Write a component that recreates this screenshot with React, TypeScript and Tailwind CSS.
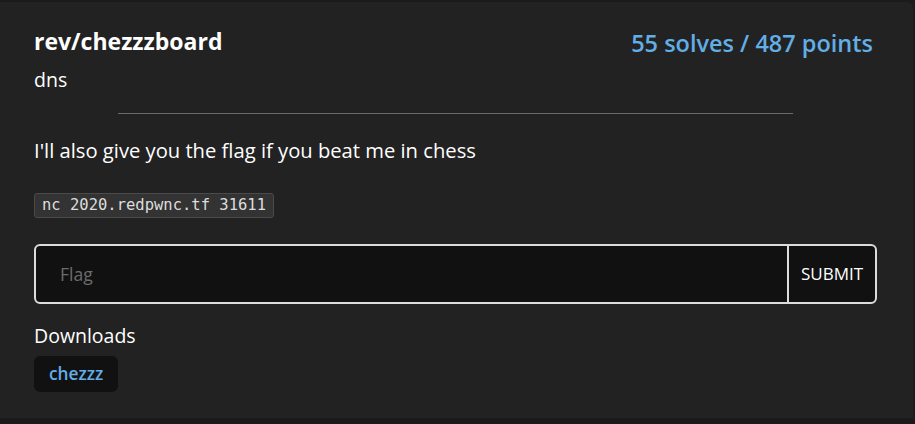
export default function App() {
  return (
    <div className="h-[424px] w-[915px] overflow-hidden bg-[#1b1b1b] font-['Open_Sans',sans-serif] text-white">
      <div className="mt-[2px] h-[416px] w-[913px] rounded-tr-[6px] bg-[#222222] pl-[34px] pr-[36px] pt-[24px]">
        <div className="flex items-start justify-between">
          <div>
            <h1 className="text-[23px] font-bold leading-[30px]">rev/chezzzboard</h1>
            <p className="mt-[11px] text-[19.5px] leading-[26px]">dns</p>
          </div>
          <div className="pr-[4px] pt-[2px] text-[23.5px] font-semibold leading-[30px] text-[#62aee6]">
            55 solves / 487 points
          </div>
        </div>
        <div className="mx-auto mt-[20px] h-px w-[675px] bg-[#6b6b6b]" />
        <p className="mt-[22px] text-[20.2px] leading-[28px]">
          I'll also give you the flag if you beat me in chess
        </p>
        <div className="mt-[29px] flex">
          <code className="block rounded-[3px] border border-[#4a4a4a] bg-[#333333] px-[7px] py-[2px] font-['DejaVu_Sans_Mono',monospace] text-[15.5px] leading-[19px] text-[#dddddd]">
            nc 2020.redpwnc.tf 31611
          </code>
        </div>
        <div className="mt-[26px] flex h-[60px] overflow-hidden rounded-[6px] border-2 border-[#dcdcdc] bg-[#111111]">
          <input
            placeholder="Flag"
            className="flex-1 bg-transparent px-[24px] text-[17.6px] text-white outline-none placeholder:text-[#6c6c6c]"
          />
          <button className="w-[88px] border-l-2 border-[#dcdcdc] text-[17px] text-white">
            SUBMIT
          </button>
        </div>
        <p className="mt-[19px] text-[19.5px] leading-[26px]">Downloads</p>
        <div className="mt-[7px] flex">
          <span className="block rounded-[6px] bg-[#111111] px-[15px] py-[6px] text-[17.3px] font-semibold leading-[24px] text-[#62aee6]">
            chezzz
          </span>
        </div>
      </div>
    </div>
  );
}
